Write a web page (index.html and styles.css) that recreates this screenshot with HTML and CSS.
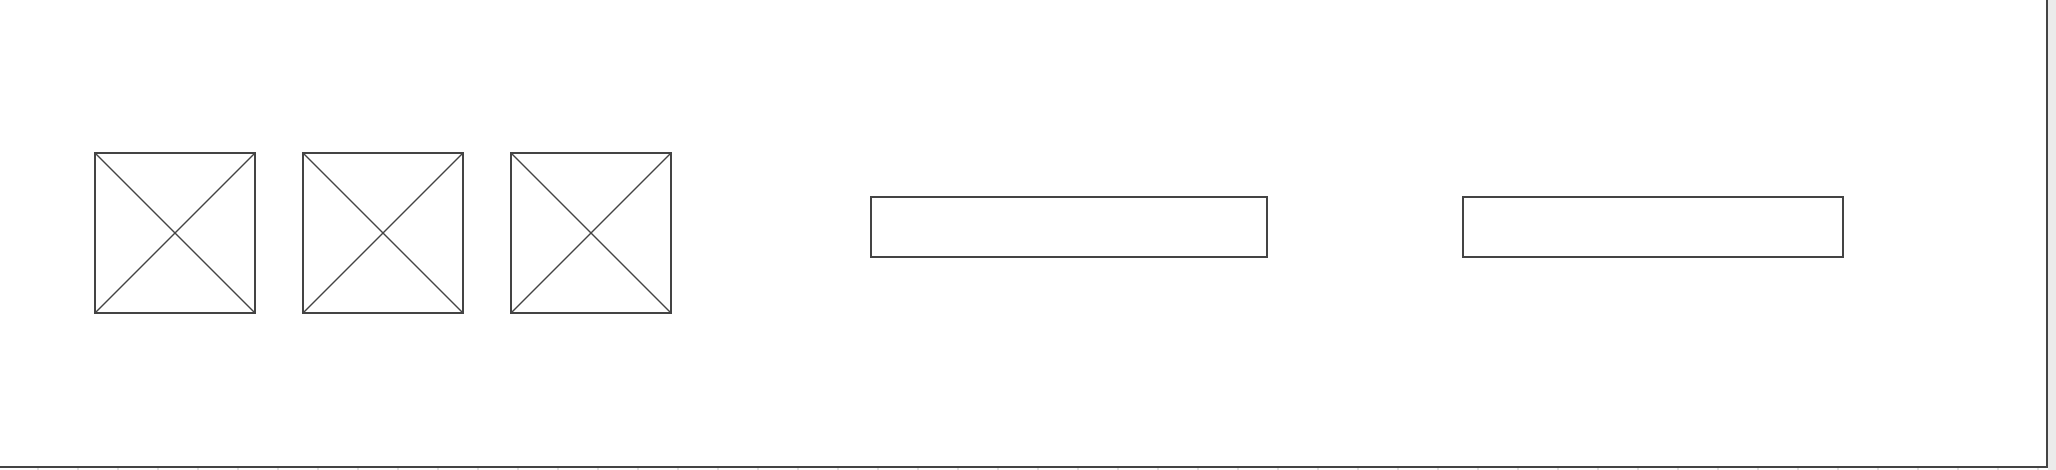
FILE: index.html
```html
<!DOCTYPE html>
<html>
<head>
<meta charset="utf-8">
<link rel="stylesheet" href="styles.css">
</head>
<body>
<div class="page">
  <div class="col">
    <div class="frame">
      <div class="thumbs">
        <div class="ph"><svg viewBox="0 0 100 100" preserveAspectRatio="none"><line x1="0" y1="0" x2="100" y2="100"/><line x1="100" y1="0" x2="0" y2="100"/></svg></div>
        <div class="ph"><svg viewBox="0 0 100 100" preserveAspectRatio="none"><line x1="0" y1="0" x2="100" y2="100"/><line x1="100" y1="0" x2="0" y2="100"/></svg></div>
        <div class="ph"><svg viewBox="0 0 100 100" preserveAspectRatio="none"><line x1="0" y1="0" x2="100" y2="100"/><line x1="100" y1="0" x2="0" y2="100"/></svg></div>
      </div>
      <div class="field f1"></div>
      <div class="field f2"></div>
    </div>
    <div class="ruler"></div>
  </div>
  <div class="rail"></div>
</div>
</body>
</html>
```
FILE: styles.css
```css
html, body {
  margin: 0;
  padding: 0;
  background: #ffffff;
  overflow: hidden;
}
.page {
  display: flex;
  width: 2056px;
  height: 470px;
}
.col {
  display: flex;
  flex-direction: column;
  width: 2048px;
}
.frame {
  box-sizing: border-box;
  width: 2048px;
  height: 468px;
  border-right: 2px solid #444444;
  border-bottom: 2px solid #444444;
  display: flex;
  align-items: center;
  padding-left: 94px;
}
.thumbs {
  display: flex;
  gap: 46px;
}
.ph {
  box-sizing: border-box;
  width: 162px;
  height: 162px;
  border: 2px solid #444444;
}
.ph svg {
  display: block;
  width: 100%;
  height: 100%;
}
.ph line {
  stroke: #444444;
  stroke-width: 1.4;
  vector-effect: non-scaling-stroke;
}
.field {
  box-sizing: border-box;
  height: 62px;
  border: 2px solid #444444;
  margin-bottom: 12px;
}
.f1 {
  width: 398px;
  margin-left: 198px;
}
.f2 {
  width: 382px;
  margin-left: 194px;
}
.ruler {
  height: 2px;
  background: repeating-linear-gradient(to right, transparent 0, transparent 37px, #e2e2e2 37px, #e2e2e2 39px, transparent 39px, transparent 40px);
}
.rail {
  width: 8px;
  height: 470px;
  background: #ebebeb;
}
```
